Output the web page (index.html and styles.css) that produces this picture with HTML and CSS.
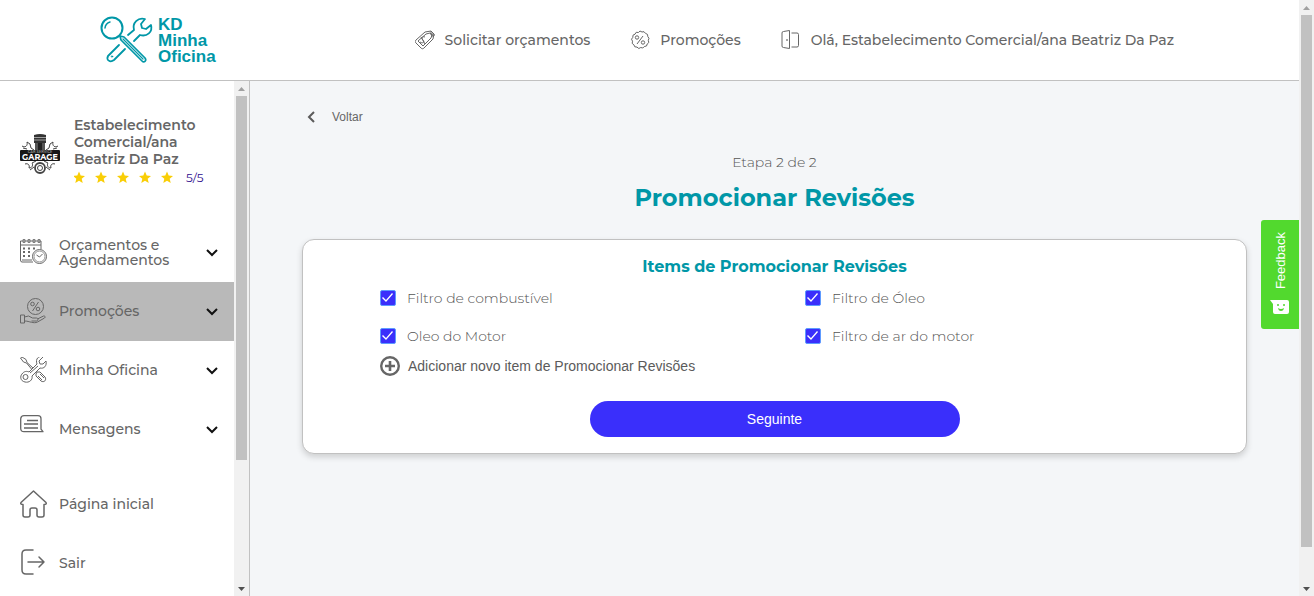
FILE: index.html
```html
<!DOCTYPE html>
<html lang="pt-BR">
<head>
<meta charset="utf-8">
<meta name="viewport" content="width=device-width, initial-scale=1">
<title>KD Minha Oficina - Promocionar Revisões</title>
<link rel="stylesheet" href="styles.css">
</head>
<body>
<div class="page">
  <header class="header">
    <a class="logo" href="#">
      <svg width="54" height="48" viewBox="0 0 54 48" fill="none" stroke="#0097a7" stroke-width="2" stroke-linecap="round" stroke-linejoin="round" aria-hidden="true">
        <circle cx="12" cy="12" r="10.500"/>
        <path d="M5 12a7 7 0 0 1 5-6" stroke-width="1.500"/>
        <path d="M20 20l4 1 21 21c2 3-1 5-3 3L21 24z" stroke-width="1.700"/>
        <path d="M23 23l20 20" stroke-width="1.200"/>
        <path d="M28 19l6-5c-2-7 4-13 11-11l-4 5 1 4 4 1 5-4c2 7-4 12-11 10l-6 6" stroke-width="1.800"/>
        <path d="M19 29L8 40c-2 4 2 7 6 4l11-11" stroke-width="1.800"/>
        <circle cx="12" cy="40.500" r=".7" stroke-width="1"/>
      </svg>
      <span class="logo-text"><span>KD</span><span>Minha</span><span>Oficina</span></span>
    </a>
    <nav class="topnav">
      <a href="#">
        <svg width="20" height="20" viewBox="0 0 20 20" fill="none" stroke="#666" stroke-width="1" stroke-linejoin="round" aria-hidden="true">
          <path d="M1 10l9-8 6-1 3 3-1 5-9 9c-1 1-2 1-3 0l-5-5c-1-1-1-2 0-3z"/>
          <path d="M3 11l8-7 4-1 2 2-1 3-8 8zM16 1v4h4M17 3v4"/>
          <path d="M10 7c-3-1-4 1-2 3s0 4-3 2M6 7l4 7"/>
        </svg>
        <span>Solicitar orçamentos</span></a>
      <a href="#">
        <svg width="20" height="20" viewBox="0 0 20 20" fill="none" stroke="#666" stroke-width="1" aria-hidden="true">
          <path d="M10 1l2 1 2-.3 1.500 1.700 2 1 .3 2.200 1.200 1.700-.7 2 .5 2.200-1.600 1.500-.7 2-2.200.5-1.500 1.500-2-.5-2 1-1.800-1.400-2.200-.3-.9-2-1.700-1.400.3-2.200-1-2 1.300-1.800.2-2.200 2-1 1.200-1.900 2.200.2z" stroke-linejoin="round"/>
          <circle cx="7" cy="7.500" r="1.700"/><circle cx="13" cy="12.500" r="1.700"/><path d="M13 6l-6 8"/>
        </svg>
        <span>Promoções</span></a>
      <a href="#">
        <svg width="20" height="20" viewBox="0 0 20 20" fill="none" stroke="#666" stroke-width="1" stroke-linejoin="round" aria-hidden="true">
          <path d="M2.500 1.500l6-1v18l-6-1q-1.500 0-1.500-1.500v-13Q1 1.500 2.500 1.500zM10.500 3H16q1.500 0 1.500 1.500v11q0 1.500-1.500 1.500h-5.500"/><circle cx="6" cy="10" r=".5"/>
        </svg>
        <span>Olá, Estabelecimento Comercial/ana Beatriz Da Paz</span></a>
    </nav>
  </header>

  <div class="body">
    <aside class="sidebar">
      <div class="side-content">
        <div class="profile">
          <svg class="avatar" width="40" height="44" viewBox="0 -4 40 44" aria-label="Car Service Garage" role="img">
            <path d="M14 1q6-2 12 0v8H14z" fill="#333"/>
            <path d="M14 3.500h12M14 6h12" stroke="#bbb" stroke-width=".8"/>
            <path d="M15 9h10v7H15z" fill="#555"/>
            <path d="M18 9h4v7h-4z" fill="#222"/>
            <g fill="none" stroke="#444">
              <path d="M2 12c3 2 6 0 5-4l3 2 1 4 3 2M38 12c-3 2-6 0-5-4l-3 2-1 4-3 2M3 14l4 1M37 14l-4 1"/>
              <path d="M5 30c3-1 5 1 4 4 4 0 4-4 3-5l4-2M35 30c-3-1-5 1-4 4-4 0-4-4-3-5l-4-2M10 36l4-3M30 36l-4-3"/>
              <circle cx="20" cy="34" r="5" stroke-width="1.800"/><circle cx="20" cy="34" r="2.500"/>
            </g>
            <rect y="16" width="40" height="11" rx="1" fill="#161616"/>
            <text x="20" y="19" class="badge-small">CAR SERVICE</text>
            <text x="20" y="25.500" class="badge-name">GARAGE</text>
          </svg>
          <div class="profile-info">
            <strong>Estabelecimento Comercial/ana Beatriz Da Paz</strong>
            <div class="rating">
              <svg width="102" height="12" viewBox="0 0 102 12" fill="#f9ce06" role="img" aria-label="5 estrelas">
                <defs><path id="star" d="M6 .5l1.700 4 4.300.4-3.300 2.800 1 4.300L6 9.700l-3.700 2.300 1-4.300L0 4.900 4.300 4.500z"/></defs>
                <use href="#star" x="-1"/><use href="#star" x="21"/><use href="#star" x="43"/><use href="#star" x="65"/><use href="#star" x="87"/>
              </svg>
              <a class="score" href="#">5/5</a>
            </div>
          </div>
        </div>
        <nav class="menu">
          <a class="item" href="#">
            <svg width="28" height="28" viewBox="0 1 28 28" fill="none" stroke="#666" aria-hidden="true">
              <path d="M13 24H2q-1.500 0-1.500-2V3H21v8M1 7h20M2 22h10"/>
              <path d="M3 1.500h2v3H3zM8 1.500h2v3H8zM13 1.500h2v3h-2zM18 1.500h2v3h-2z" stroke-width=".8"/>
              <path d="M3 10.500h2M8 10.500h2M13 10.500h2M3 14h2M8 14h2M3 18h2M8 18h2" stroke-width="2"/>
              <circle cx="19.500" cy="18.500" r="7"/><circle cx="19.500" cy="18.500" r="5.500" stroke-width=".7"/><path d="M16.500 17l3 2 3-3"/>
            </svg>
            <span class="label">Orçamentos e Agendamentos</span>
            <svg class="chev" width="12" height="8" viewBox="0 0 12 8" aria-hidden="true"><path d="M1 1l5 5 5-5"/></svg>
          </a>
          <a class="item active" href="#">
            <svg width="28" height="28" viewBox="0 0 28 28" fill="none" stroke="#666" stroke-linejoin="round" aria-hidden="true">
              <circle cx="15.500" cy="8.500" r="8"/><circle cx="12.500" cy="6" r="1.800"/><circle cx="18" cy="11" r="1.800"/><path d="M18.500 4l-6 9"/>
              <path d="M.500 17h4v8h-4zM4.500 19l4-1 4 2h4c2 0 2 3 0 3h-5M17.500 21l6-3c2 0 2 1 1 2l-7 4c-4 2-8-1-13-1"/>
            </svg>
            <span class="label">Promoções</span>
            <svg class="chev" width="12" height="8" viewBox="0 0 12 8" aria-hidden="true"><path d="M1 1l5 5 5-5"/></svg>
          </a>
          <a class="item" href="#">
            <svg width="28" height="28" viewBox="0 1 28 28" fill="none" stroke="#666" stroke-linejoin="round" aria-hidden="true">
              <path d="M.500 2l1.500-1 4 2.500 1 3 6 5.500M.500 2l3 4 3 1 5 6"/>
              <path d="M17 16h3l5 5c2 3-1 6-4 4l-5-5v-2zM18 20l4 4M20 18l4 4"/>
              <path d="M23 1l-4 4 1 3 3 0 3-3c1 5-2 8-6 7l-8 8c1 4-3 7-7 6-5-1-5-6-3-8 2-3 5-3 7-2l8-8C15 3 19-1 23 1zM10 17l8-7"/>
              <circle cx="5.500" cy="21" r="2.500"/>
            </svg>
            <span class="label">Minha Oficina</span>
            <svg class="chev" width="12" height="8" viewBox="0 0 12 8" aria-hidden="true"><path d="M1 1l5 5 5-5"/></svg>
          </a>
          <a class="item" href="#">
            <svg width="28" height="28" viewBox="0 1 28 28" fill="none" stroke="#666" stroke-width="1.300" stroke-linejoin="round" overflow="visible" aria-hidden="true">
              <path d="M4 .700h14q3 0 3 3v10.500l2 2.500H4q-3.300 0-3.300-3.500V3.700Q1 .700 4 .700z"/><path d="M7 5.500h11M4 9h14M4 13h14" stroke-width="1.600"/>
            </svg>
            <span class="label">Mensagens</span>
            <svg class="chev" width="12" height="8" viewBox="0 0 12 8" aria-hidden="true"><path d="M1 1l5 5 5-5"/></svg>
          </a>
        </nav>
        <nav class="menu">
          <a class="item" href="#">
            <svg width="28" height="28" viewBox="0 1 28 28" fill="none" stroke="#666" stroke-width="1.500" stroke-linejoin="round" stroke-linecap="round" overflow="visible" aria-hidden="true">
              <path d="M13.500 1L26 12.500q1 2-2 2V25q0 2-2 2h-3q-2 0-2-2v-5q0-2-2-2h-3q-2 0-2 2v5q0 2-2 2H5q-2 0-2-2V14.500q-3 0-2-2z"/>
            </svg>
            <span class="label">Página inicial</span>
          </a>
          <a class="item" href="#">
            <svg width="28" height="28" viewBox="0 1 28 28" fill="none" stroke="#666" stroke-width="1.500" stroke-linejoin="round" stroke-linecap="round" overflow="visible" aria-hidden="true">
              <path d="M13 1H6Q2 1 2 5v16q0 4 4 4h7M8 13h16M19 8l5 5-5 5"/>
            </svg>
            <span class="label">Sair</span>
          </a>
        </nav>
      </div>
      <div class="scrollbar" aria-hidden="true"><i class="up"></i><div class="track"><div class="thumb thumb-side"></div></div><i class="down"></i></div>
    </aside>

    <main class="main">
      <a class="back" href="#">
        <svg width="8" height="12" viewBox="0 0 8 12" fill="none" stroke="#5b5b5b" stroke-width="2" aria-hidden="true"><path d="M7 1L2 6l5 5"/></svg>
        <span>Voltar</span></a>
      <p class="step">Etapa 2 de 2</p>
      <h1>Promocionar Revisões</h1>
      <form class="card">
        <h2>Items de Promocionar Revisões</h2>
        <div class="options">
          <label><input type="checkbox" checked><span>Filtro de combustível</span></label>
          <label><input type="checkbox" checked><span>Filtro de Óleo</span></label>
          <label><input type="checkbox" checked><span>Oleo do Motor</span></label>
          <label><input type="checkbox" checked><span>Filtro de ar do motor</span></label>
        </div>
        <button class="add" type="button">
          <svg width="20" height="20" viewBox="0 0 20 20" fill="none" stroke="#666" aria-hidden="true"><circle cx="10" cy="10" r="8.800" stroke-width="2.400"/><path d="M10 5v10M5 10h10" stroke-width="2.600"/></svg>
          <span>Adicionar novo item de Promocionar Revisões</span></button>
        <button class="next" type="button">Seguinte</button>
      </form>
    </main>
  </div>
</div>
<div class="scrollbar" aria-hidden="true"><i class="up"></i><div class="track"><div class="thumb thumb-page"></div></div><i class="down"></i></div>

<button class="feedback" type="button">
  <span>Feedback</span>
  <svg width="20" height="15" viewBox="0 0 20 15" aria-hidden="true"><path d="M0 0h17q2 0 2 2v10q0 2-2 2H5q-2 0-2-2V4z" fill="#fff"/><path d="M7 5h2M13 5h2" stroke="#52d92e" stroke-width="1.500"/><path d="M8 8q3 2 6 0-.5 3-3 3t-3-3z" fill="#52d92e"/></svg>
</button>
</body>
</html>
```
FILE: styles.css
```css
* { box-sizing: border-box; }
body {
  margin: 0;
  display: flex;
  min-height: 100vh;
  background: #f4f6f8;
  color: #666;
  font-family: Montserrat, Inter, "Open Sans", sans-serif;
  font-size: 14px;
}
a { color: inherit; text-decoration: none; }
svg { display: block; flex: none; }
h1, h2, p { margin: 0; }
button { border: 0; cursor: pointer; font-family: "Liberation Sans", Arial, sans-serif; }

.page { flex: 1; min-width: 0; display: flex; flex-direction: column; }

.header {
  display: flex;
  align-items: center;
  justify-content: space-between;
  height: 81px;
  padding: 0 125px 0 100px;
  background: #fff;
  border-bottom: 1px solid #c1c1c1;
}
.logo { display: flex; align-items: center; gap: 4px; color: #0097a7; }
.logo-text { display: flex; flex-direction: column; padding-top: 1px; font-family: "Liberation Sans", Arial, sans-serif; font-size: 17px; font-weight: 700; line-height: 16px; }
.topnav { display: flex; gap: 40px; font-weight: 500; line-height: 20px; white-space: nowrap; }
.topnav a { display: flex; align-items: center; gap: 10px; }

.body { flex: 1; display: flex; }
.sidebar { display: flex; width: 250px; flex: none; background: #fff; border-right: 1px solid #c1c1c1; }
.side-content { flex: 1; display: flex; flex-direction: column; gap: 16px; font-weight: 500; }
.profile { display: flex; align-items: center; gap: 14px; padding: 36px 20px 21px; }
.profile strong { display: block; font-weight: 600; font-size: 14px; line-height: 17px; }
.badge-small { font-family: Roboto, sans-serif; font-size: 4px; fill: #999; text-anchor: middle; }
.badge-name { font-size: 8px; font-weight: 700; fill: #fff; text-anchor: middle; }
.rating { display: flex; align-items: center; gap: 10px; height: 18px; }
.score { font-size: 12px; font-weight: 400; color: #2b0a8c; }
.item { display: flex; align-items: center; gap: 11px; height: 59px; padding: 0 16px 0 20px; line-height: 15px; }
.item .label { flex: 1; }
.item.active { background: #b9b9b9; }
.chev { fill: none; stroke: #111; stroke-width: 2; }

.scrollbar { display: flex; flex-direction: column; align-items: center; width: 15px; flex: none; background: #f1f1f1; }
.scrollbar i { width: 7px; height: 4px; margin: 6px 0 5px; background: #505050; }
.scrollbar .up { clip-path: polygon(50% 0, 100% 100%, 0 100%); background: #a0a0a0; }
.scrollbar .down { clip-path: polygon(0 0, 100% 0, 50% 100%); }
.track { flex: 1; width: 11px; }
.thumb { background: #c1c1c1; }
.thumb-side { height: 75%; }
.thumb-page { height: 94%; }

.main { flex: 1; min-width: 0; display: flex; flex-direction: column; align-items: center; padding: 28px 52px; }
.back { align-self: flex-start; display: flex; align-items: center; gap: 17px; padding-left: 5px; font: 12px/16px "Liberation Sans", Arial, sans-serif; }
.step { margin-top: 27px; font-weight: 300; line-height: 20px; color: #555; }
h1 { margin-top: 9px; font-size: 24px; line-height: 34px; font-weight: 700; color: #0097a7; }
.card {
  align-self: stretch;
  margin-top: 24px;
  padding: 17px 16px 16px 77px;
  display: flex;
  flex-direction: column;
  background: #fff;
  border: 1px solid #c1c1c1;
  border-radius: 12px;
  box-shadow: 0 3px 6px rgba(0, 0, 0, .16);
}
h2 { margin-left: -61px; text-align: center; font-size: 16px; line-height: 20px; font-weight: 700; color: #0097a7; }
.options { display: grid; grid-template-columns: 1fr 1fr; row-gap: 18px; margin-top: 11px; font-weight: 300; line-height: 20px; color: #555; }
.options label { display: flex; align-items: center; gap: 11px; }
.options input {
  appearance: none;
  width: 16px;
  height: 16px;
  margin: 0;
  border: 1px solid #5e9bff;
  border-radius: 2px;
  background: #3a2ffb;
}
.options input::before {
  content: "";
  display: block;
  width: 14px;
  height: 14px;
  background: #fff;
  clip-path: polygon(1px 7px, 2px 6px, 5px 9px, 11px 2px, 12px 3px, 5px 11px);
}
.add { align-self: flex-start; display: flex; align-items: center; gap: 8px; margin-top: 10px; padding: 0; background: none; color: #5b5b5b; font-size: 14px; line-height: 20px; }
.next { align-self: center; width: 370px; margin: 25px 61px 0 0; padding: 8px; border-radius: 18px; background: #3a2ffb; color: #fff; font-size: 14px; line-height: 20px; }

.feedback {
  position: fixed;
  right: 15px;
  top: 220px;
  width: 38px;
  height: 109px;
  padding: 12px 0 14px;
  display: flex;
  flex-direction: column;
  align-items: center;
  justify-content: space-between;
  border-radius: 3px 0 0 3px;
  background: #52d92e;
  color: #fff;
  font-size: 13px;
}
.feedback span { writing-mode: vertical-rl; transform: rotate(180deg); }
```
